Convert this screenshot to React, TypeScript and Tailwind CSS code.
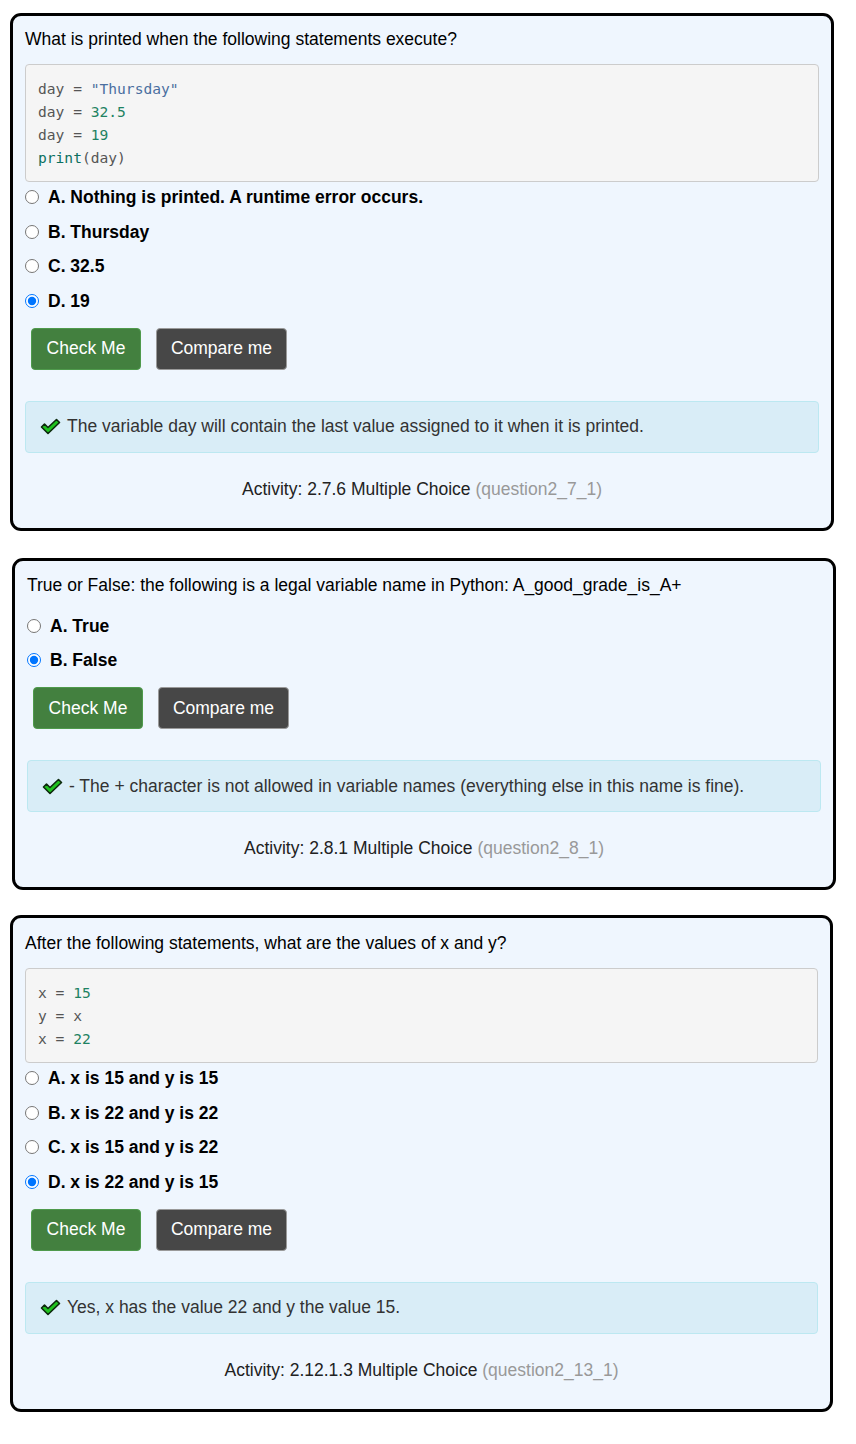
import React from "react";

type Seg = { t: string; c: string };

function Check() {
  return (
    <svg width="21" height="17" viewBox="0 0 21 17" className="shrink-0">
      <path
        d="M1.5 9 L4.5 6 L8 9.5 L16.5 1.5 L19.5 4.5 L8 15.5 Z"
        fill="#1fc21f"
        stroke="#0d2a0d"
        strokeWidth="1.6"
        strokeLinejoin="round"
      />
    </svg>
  );
}

function Radio({ checked }: { checked: boolean }) {
  return (
    <input
      type="radio"
      checked={checked}
      readOnly
      className="m-0 h-[14px] w-[14px] shrink-0 accent-[#0075ff]"
    />
  );
}

function Buttons() {
  return (
    <div className="ml-[6px] flex gap-[15px]">
      <button className="h-[42px] w-[110px] rounded-[4px] border border-[#4f9a4c] bg-[#43803f] text-[17.5px] text-white">
        Check Me
      </button>
      <button className="h-[42px] w-[131px] rounded-[4px] border border-[#9a9a9a] bg-[#474747] text-[17.5px] text-white">
        Compare me
      </button>
    </div>
  );
}

function Code({ lines }: { lines: Seg[][] }) {
  return (
    <div className="rounded-[4px] border border-[#cccccc] bg-[#f5f5f5] px-[12px] py-[12px] font-['DejaVu_Sans_Mono',monospace] text-[14.6px] leading-[23px]">
      {lines.map((l, i) => (
        <div key={i} className="whitespace-pre">
          {l.map((s, j) => (
            <span key={j} style={{ color: s.c }}>
              {s.t}
            </span>
          ))}
        </div>
      ))}
    </div>
  );
}

function Card({
  question,
  code,
  options,
  selected,
  feedback,
  activity,
  paren,
  className,
  optTop,
}: {
  question: string;
  code?: Seg[][];
  options: string[];
  selected: number;
  feedback: React.ReactNode;
  activity: string;
  paren: string;
  className: string;
  optTop: string;
}) {
  return (
    <div
      className={`rounded-[11px] border-[3px] border-black bg-[#eff6fe] px-[12px] pb-[27px] ${className}`}
    >
      <div className="text-[17.5px] leading-[24px] text-black">{question}</div>
      {code && (
        <div className="mt-[13px]">
          <Code lines={code} />
        </div>
      )}
      <div className={`flex flex-col gap-[10.5px] ${optTop}`}>
        {options.map((o, i) => (
          <div key={i} className="flex h-[24px] items-center">
            <Radio checked={i === selected} />
            <span className="ml-[9px] text-[17.5px] font-bold leading-[24px] text-black">
              {o}
            </span>
          </div>
        ))}
      </div>
      <div className="mt-[15px]">
        <Buttons />
      </div>
      <div className="mt-[31px] flex h-[52px] items-center rounded-[4px] border border-[#bce8f1] bg-[#d9edf7] pl-[14px] text-[17.5px] text-[#333333]">
        <Check />
        <span className="ml-[6px]">{feedback}</span>
      </div>
      <div className="mt-[24px] text-center text-[17.5px] leading-[24px] text-[#222222]">
        {activity} <span className="text-[#999999]">{paren}</span>
      </div>
    </div>
  );
}

const G = "#555555";
const S = "#4a6fa0";
const N = "#1e8262";
const P = "#0b7060";

export default function App() {
  return (
    <div className="min-h-[1444px] bg-white pt-[13px] font-['Liberation_Sans',Arial,sans-serif]">
      <Card
        className="ml-[10px] w-[824px] pt-[11px]"
        question="What is printed when the following statements execute?"
        code={[
          [{ t: "day = ", c: G }, { t: '"Thursday"', c: S }],
          [{ t: "day = ", c: G }, { t: "32.5", c: N }],
          [{ t: "day = ", c: G }, { t: "19", c: N }],
          [{ t: "print", c: P }, { t: "(day)", c: G }],
        ]}
        optTop="mt-[3px]"
        options={[
          "A. Nothing is printed. A runtime error occurs.",
          "B. Thursday",
          "C. 32.5",
          "D. 19",
        ]}
        selected={3}
        feedback="The variable day will contain the last value assigned to it when it is printed."
        activity="Activity: 2.7.6 Multiple Choice"
        paren="(question2_7_1)"
      />
      <Card
        className="mt-[27px] ml-[12px] w-[824px] pt-[12px]"
        question="True or False: the following is a legal variable name in Python: A_good_grade_is_A+"
        optTop="mt-[17px]"
        options={["A. True", "B. False"]}
        selected={1}
        feedback="- The + character is not allowed in variable names (everything else in this name is fine)."
        activity="Activity: 2.8.1 Multiple Choice"
        paren="(question2_8_1)"
      />
      <Card
        className="mt-[25px] ml-[10px] w-[823px] pt-[13px]"
        question="After the following statements, what are the values of x and y?"
        code={[
          [{ t: "x = ", c: G }, { t: "15", c: N }],
          [{ t: "y = x", c: G }],
          [{ t: "x = ", c: G }, { t: "22", c: N }],
        ]}
        optTop="mt-[3px]"
        options={[
          "A. x is 15 and y is 15",
          "B. x is 22 and y is 22",
          "C. x is 15 and y is 22",
          "D. x is 22 and y is 15",
        ]}
        selected={3}
        feedback="Yes, x has the value 22 and y the value 15."
        activity="Activity: 2.12.1.3 Multiple Choice"
        paren="(question2_13_1)"
      />
    </div>
  );
}
